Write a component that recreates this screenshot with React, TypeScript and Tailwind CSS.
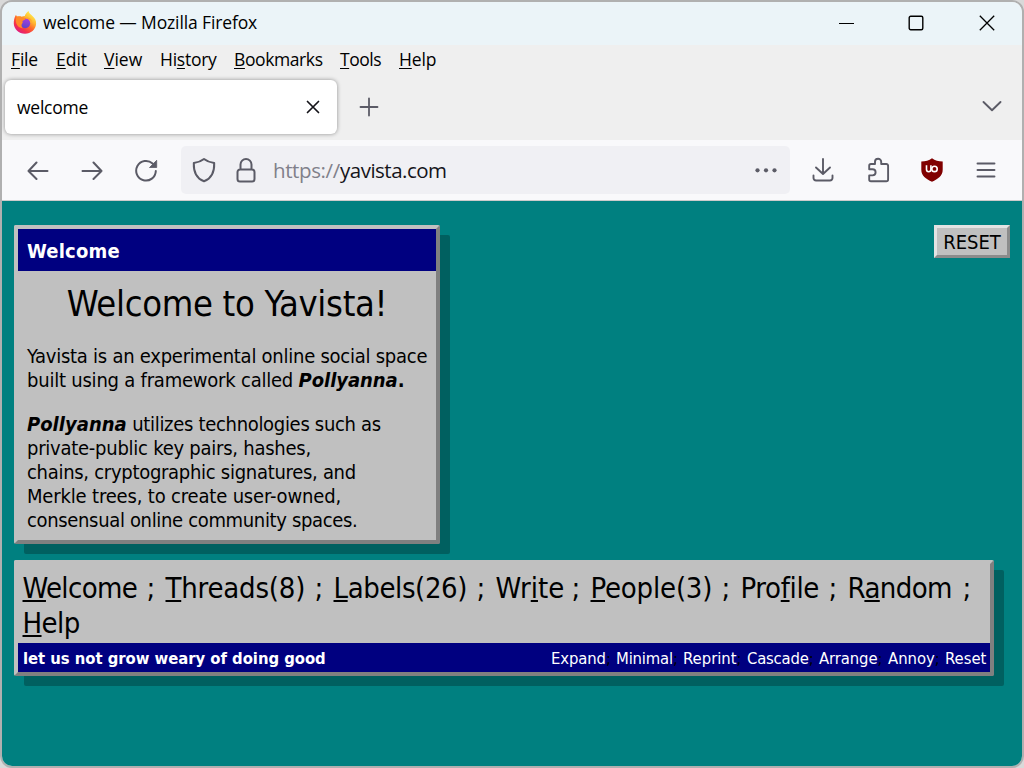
import React from "react";

const page =
  "[font-family:'DejaVu_Sans_Condensed','DejaVu_Sans',sans-serif] font-stretch-condensed";

type Label = { pre?: string; key: string; post: string; cls: string };

const menus: Label[] = [
  { key: "F", post: "ile", cls: "w-[45px] tracking-[-0.17px]" },
  { key: "E", post: "dit", cls: "w-[48px]" },
  { key: "V", post: "iew", cls: "w-[56px]" },
  { pre: "Hi", key: "s", post: "tory", cls: "w-[74px] tracking-[-0.25px]" },
  { key: "B", post: "ookmarks", cls: "w-[106px] tracking-[-0.4px]" },
  { key: "T", post: "ools", cls: "w-[59px] tracking-[-0.49px]" },
  { key: "H", post: "elp", cls: "w-[40px] tracking-[-0.15px]" },
];

const links: Label[] = [
  { key: "W", post: "elcome", cls: "w-[124px] tracking-[-0.65px]" },
  { key: "T", post: "hreads(8)", cls: "w-[149px] tracking-[-0.2px]" },
  { key: "L", post: "abels(26)", cls: "w-[143px] tracking-[-0.4px]" },
  { pre: "Wr", key: "i", post: "te", cls: "w-[76px]" },
  { key: "P", post: "eople(3)", cls: "w-[131px] tracking-[-0.2px]" },
  { pre: "Pro", key: "f", post: "ile", cls: "w-[88px] tracking-[-0.35px]" },
  { pre: "R", key: "a", post: "ndom", cls: "w-[115px] tracking-[-0.6px]" },
];

const actions = [
  { text: "Expand", cls: "w-[65px] tracking-[-0.1px]" },
  { text: "Minimal", cls: "w-[67px] tracking-[-0.17px]" },
  { text: "Reprint", cls: "w-[64px]" },
  { text: "Cascade", cls: "w-[72px] tracking-[-0.2px]" },
  { text: "Arrange", cls: "w-[69px] tracking-[-0.1px]" },
  { text: "Annoy", cls: "w-[57px]" },
  { text: "Reset", cls: "w-[42px]" },
];

function Mnemonic({ item, u }: { item: Label; u: string }) {
  return (
    <>
      {item.pre}
      <span className={u}>{item.key}</span>
      {item.post}
    </>
  );
}

function FirefoxLogo() {
  return (
    <svg width="24" height="24" viewBox="0 0 24 24" className="shrink-0">
      <defs>
        <linearGradient id="ring" x1="0.85" y1="0.1" x2="0.25" y2="0.95">
          <stop offset="0" stopColor="#fff04f" />
          <stop offset="0.3" stopColor="#ffb932" />
          <stop offset="0.55" stopColor="#ff6a2b" />
          <stop offset="0.8" stopColor="#f5314c" />
          <stop offset="1" stopColor="#e01f7e" />
        </linearGradient>
        <linearGradient id="globe" x1="0.6" y1="0" x2="0.4" y2="1">
          <stop offset="0" stopColor="#a83de0" />
          <stop offset="1" stopColor="#5a45c8" />
        </linearGradient>
      </defs>
      <path d="M11.800 5C12.500 2.500 14.300 1 15.600 0c.2 2.200 2.200 3.400 3.800 5C22 7 23.300 9.800 23.100 12.800c-.4 6-5.200 9.900-11.100 9.900C5.700 22.700 1.100 18.300 .8 12.800.7 9.500 1.300 6.500 3 3.800c.3.900.7 1.600 1.300 2.100C5.500 5.300 7.300 5.200 8.600 5.700 9.600 5.200 10.800 4.900 11.800 5Z" fill="url(#ring)" />
      <circle cx="12.200" cy="12.300" r="5" fill="url(#globe)" />
      <path d="M3.500 5.600c2.200-.8 4.400-.5 6 .8 1.400 0 2.700.3 3.200 1-.3 1.500-2.300 1.700-3.200 2.600-.4.800.8 1.300 0 2-1.500 1.500-1.200 4.200.4 5.400-4-.2-6.900-3.500-7-7.300 0-1.600.1-3.200.6-4.500Z" fill="#ff8a28" />
      <path d="M12.800 7.300c2.500-.4 4.800.8 5.600 3.300" fill="none" stroke="#ffa62c" strokeWidth="1.300" />
    </svg>
  );
}

function Line({ d, w, h, sw = 2, color = "#5b5b66" }: { d: string; w: number; h: number; sw?: number; color?: string }) {
  return (
    <svg width={w} height={h} viewBox={`0 0 ${w} ${h}`} fill="none" stroke={color} strokeWidth={sw} strokeLinecap="round" strokeLinejoin="round" className="shrink-0">
      <path d={d} />
    </svg>
  );
}

export default function App() {
  return (
    <div className="h-[768px] w-[1024px] overflow-hidden bg-[#d9d9d9]">
      <div className="flex h-[768px] w-[1024px] flex-col overflow-hidden rounded-[12px] border-2 border-[#b0b0b0] bg-[#efefef] text-black [font-family:'Open_Sans',sans-serif]">
        {/* title bar */}
        <div className="flex h-[43px] shrink-0 items-center bg-[#ebf4f8] pb-[2px] pl-[11px]">
          <FirefoxLogo />
          <span className="ml-[6px] text-[17.5px] leading-none tracking-[-0.13px] whitespace-nowrap">welcome — Mozilla Firefox</span>
          <div className="ml-auto flex items-center pr-[27px]">
            <svg width="16" height="16" viewBox="0 0 16 16" className="mr-[53px]"><path d="M0 8.500h15" stroke="#000" strokeWidth="1.200" /></svg>
            <svg width="16" height="16" viewBox="0 0 16 16" className="mr-[55px]"><rect x="1.200" y="1.200" width="13.600" height="13.600" rx="1.500" fill="none" stroke="#000" strokeWidth="1.400" /></svg>
            <svg width="16" height="16" viewBox="0 0 16 16"><path d="M.8.8l14.400 14.400M15.200.8.8 15.200" stroke="#000" strokeWidth="1.300" /></svg>
          </div>
        </div>

        {/* menu bar */}
        <div className="flex h-[32px] shrink-0 items-center pb-[2px] pl-[9px] text-[17.5px] leading-none">
          {menus.map((m) => (
            <span key={m.key + m.post} className={"whitespace-nowrap " + m.cls}>
              <Mnemonic item={m} u="underline decoration-1 underline-offset-[2px] [text-decoration-skip-ink:none]" />
            </span>
          ))}
        </div>

        {/* tab strip */}
        <div className="flex h-[63px] shrink-0 items-start pt-[3px] pl-[3px]">
          <div className="flex h-[54px] w-[332px] items-center justify-between rounded-[6px] bg-white pr-[16px] pl-[12px] shadow-[0_0_4px_rgba(0,0,0,0.4)]">
            <span className="pt-[2px] text-[17.5px] leading-none tracking-[-0.25px]">welcome</span>
            <Line w={16} h={16} d="M2.500 2.500l11 11M13.500 2.500l-11 11" sw={1.700} color="#15141a" />
          </div>
          <div className="ml-[22px] flex h-[54px] items-center"><Line w={20} h={20} d="M1.500 10h17M10 1.500v17" sw={1.800} /></div>
          <div className="mr-[20px] ml-auto flex h-[52px] items-center"><Line w={20} h={12} d="M1.500 2l8.500 8.200L18.500 2" sw={1.900} /></div>
        </div>

        {/* navigation toolbar */}
        <div className="flex h-[61px] shrink-0 items-center border-b border-[#cccccc] bg-[#f9f9fb] pl-[25px]">
          <Line w={22} h={20} d="M20.500 11H1.500M9.500 2.500l-8 8.500 8 8" />
          <div className="ml-[32px]"><Line w={22} h={20} d="M1.500 11h19M12.500 2.500l8 8.500-8 8" /></div>
          <svg width="24" height="24" viewBox="0 0 24 24" className="ml-[31px] shrink-0">
            <path d="M21.800 13A9.800 9.800 0 1 1 18.600 5.500" fill="none" stroke="#5b5b66" strokeWidth="2" strokeLinecap="round" />
            <path d="M22.700 2.300v7.200h-7.200Z" fill="#5b5b66" stroke="#5b5b66" strokeWidth=".8" strokeLinejoin="round" />
          </svg>
          <div className="ml-[23px] flex h-[48px] w-[609px] items-center rounded-[5px] bg-[#f0f0f4] pl-[11px]">
            <Line w={24} h={26} d="M12 2C9.500 4 5.500 5.500 1.800 6.100 1.500 14.500 4.500 21.500 12 24.300c7.500-2.800 10.500-9.800 10.200-18.200C18.500 5.500 14.500 4 12 2Z" />
            <div className="ml-[20px]"><Line w={20} h={26} d="M4.500 12.500V7.500a5.500 5.500 0 0 1 11 0v5M4 12.500h12a2.500 2.500 0 0 1 2.500 2.500v7A2.500 2.500 0 0 1 16 24.500H4a2.500 2.500 0 0 1-2.500-2.500v-7A2.500 2.500 0 0 1 4 12.500Z" /></div>
            <div className="ml-[17px] flex text-[20.5px] leading-none">
              <span className="w-[67px] tracking-[-0.38px] text-[#80808a]">https://</span>
              <span className="tracking-[-0.5px] text-[#15141a]">yavista.com</span>
            </div>
            <svg width="24" height="6" viewBox="0 0 24 6" className="mr-[12px] ml-auto" fill="#5b5b66">
              <circle cx="3.500" cy="3.300" r="2.100" /><circle cx="12" cy="3.300" r="2.100" /><circle cx="20.500" cy="3.300" r="2.100" />
            </svg>
          </div>
          <div className="ml-[22px]"><Line w={22} h={26} d="M11 2v14.500M4 10.500l7 6.500 7-6.500M1.500 18.500V21a2.500 2.500 0 0 0 2.500 2.500h14a2.500 2.500 0 0 0 2.500-2.500v-2.500" sw={1.900} /></div>
          <div className="ml-[33px]"><Line w={24} h={26} d="M2.200 12.200V8.800a1.800 1.800 0 0 1 1.800-1.800h4V4.800a3.100 3.100 0 0 1 6.200 0V7h5.100a1.800 1.800 0 0 1 1.800 1.800V22.500a1.800 1.800 0 0 1-1.800 1.800H4a1.800 1.800 0 0 1-1.800-1.800V18.400h3.300a3.100 3.100 0 0 0 0-6.200Z" sw={1.900} /></div>
          <svg width="22" height="26" viewBox="0 0 22 26" className="ml-[30px] shrink-0">
            <path d="M11 1.200C8 3.400 4.500 4.300.3 4.600v8.200c0 6 4.600 9.300 10.700 12 6.100-2.700 10.700-6 10.700-12V4.600C17.500 4.300 14 3.400 11 1.200Z" fill="#800000" />
            <path d="M5.500 8.300v4.200a2.200 2.200 0 0 0 4.400 0V8.300" fill="none" stroke="#fff" strokeWidth="1.600" />
            <circle cx="13.500" cy="11.900" r="2.700" fill="none" stroke="#fff" strokeWidth="1.600" />
          </svg>
          <div className="ml-[33px]"><Line w={20} h={20} d="M1.500 3.500h17M1.500 10h17M1.500 16.500h17" sw={1.900} /></div>
        </div>

        {/* page */}
        <div className={"flex grow flex-col bg-[#008080] " + page}>
          <div className="flex items-start justify-between pt-[24px] pr-[12px] pl-[12px]">
            <section className="h-[319px] w-[426px] rounded-[2px] border-4 border-t-[#c0c0c0] border-r-[#808080] border-b-[#808080] border-l-[#c0c0c0] bg-[#c0c0c0] shadow-[10px_10px_0_rgba(0,0,0,0.25)]">
              <div className="flex h-[42px] items-center bg-[#000080] pt-[2px] pl-[9px] text-[20px] leading-[24px] font-bold tracking-[0.2px] text-white">
                Welcome
              </div>
              <h1 className="mt-[11px] text-center text-[36px] leading-[44px] tracking-[-0.3px] whitespace-nowrap">Welcome to Yavista!</h1>
              <div className="mt-[18px] pl-[9px] text-[20px] leading-[24px] tracking-[-0.25px] whitespace-nowrap">
                <p>
                  Yavista is an experimental online social space<br />
                  <span className="tracking-[-0.22px]">built using a framework called </span><b className="tracking-[-0.05px]"><i>Pollyanna</i>.</b>
                </p>
                <p className="mt-[20px]">
                  <b className="tracking-[0.03px] italic">Pollyanna</b><span className="tracking-[-0.31px]"> utilizes technologies such as</span><br />
                  private-public key pairs, hashes,<br />
                  <span className="tracking-[-0.29px]">chains, cryptographic signatures, and</span><br />
                  <span className="tracking-[-0.17px]">Merkle trees, to create user-owned,</span><br />
                  <span className="tracking-[-0.34px]">consensual online community spaces.</span>
                </p>
              </div>
            </section>
            <button className="flex h-[33px] w-[76px] items-center justify-center border-3 border-t-[#e3e3e3] border-r-[#8c8c8c] border-b-[#8c8c8c] border-l-[#e3e3e3] bg-[#c0c0c0] pt-[1px] text-[20px] leading-none">
              RESET
            </button>
          </div>

          <nav className="mt-[16px] ml-[12px] flex h-[116px] w-[980px] flex-col rounded-[2px] border-4 border-t-[#c0c0c0] border-r-[#808080] border-b-[#808080] border-l-[#c0c0c0] bg-[#c0c0c0] shadow-[10px_10px_0_rgba(0,0,0,0.25)]">
            <div className="grow pt-[7px] pl-[4.5px] text-[29px] leading-[35px]">
              <div className="flex">
                {links.map((l) => (
                  <React.Fragment key={l.key + l.post}>
                    <span className={"whitespace-nowrap " + l.cls}>
                      <Mnemonic item={l} u="underline decoration-2 underline-offset-[2px] [text-decoration-skip-ink:none]" />
                    </span>
                    <span className="w-[19px]">;</span>
                  </React.Fragment>
                ))}
              </div>
              <div className="tracking-[-0.6px]">
                <span className="underline decoration-2 underline-offset-[2px] [text-decoration-skip-ink:none]">H</span>elp
              </div>
            </div>
            <div className="flex h-[29px] shrink-0 items-center justify-between bg-[#000080] pt-[4px] pr-[3px] pl-[5px] text-[16.5px] leading-none whitespace-nowrap">
              <span className="font-bold tracking-[-0.03px] text-white">let us not grow weary of doing good</span>
              <span className="flex text-white">
                {actions.map((a, i) => (
                  <span key={a.text} className={a.cls}>
                    {a.text}
                    {i < actions.length - 1 && <span className="text-black">;</span>}
                  </span>
                ))}
              </span>
            </div>
          </nav>
        </div>
      </div>
    </div>
  );
}
